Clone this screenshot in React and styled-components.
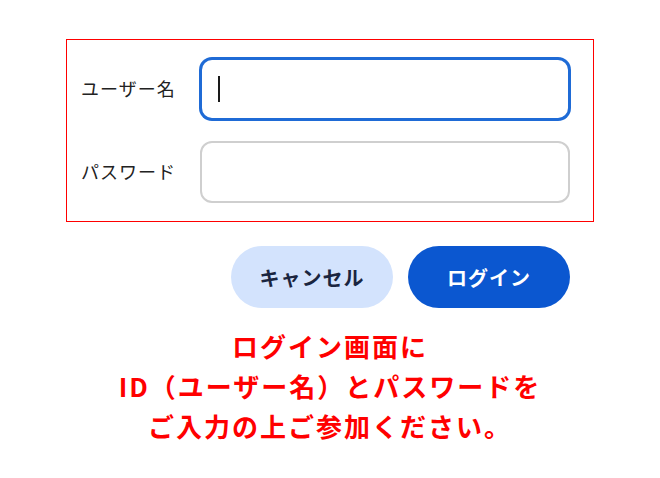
import React from 'react'
import styled, { createGlobalStyle } from 'styled-components'

const GlobalStyle = createGlobalStyle`
  html, body {
    margin: 0;
    padding: 0;
    background: #ffffff;
  }
  body {
    font-family: "Noto Sans CJK JP", "Noto Sans", sans-serif;
  }
`

function App() {
  return (
    <Page>
      <GlobalStyle />
      <FormBox>
        <Label htmlFor="user">ユーザー名</Label>
        <FieldWrap>
          <Field id="user" type="text" $focused autoFocus />
          <Caret />
        </FieldWrap>
        <Label htmlFor="pass">パスワード</Label>
        <FieldWrap>
          <Field id="pass" type="password" />
        </FieldWrap>
      </FormBox>

      <Buttons>
        <PillButton>キャンセル</PillButton>
        <PillButton $primary>ログイン</PillButton>
      </Buttons>

      <Notice>
        ログイン画面に<br />
        ID（ユーザー名）とパスワードを<br />
        ご入力の上ご参加ください。
      </Notice>
    </Page>
  )
}

export default App

const Page = styled.div`
  width: 660px;
  height: 478px;
  display: flex;
  flex-direction: column;
  align-items: center;
  padding-top: 39px;
  box-sizing: border-box;
`

const FormBox = styled.div`
  width: 528px;
  box-sizing: border-box;
  border: 1px solid #ff0000;
  padding: 18px 23px 18px 14px;
  display: grid;
  grid-template-columns: 119px 1fr;
  row-gap: 21px;
  align-items: center;
`

const Label = styled.label`
  font-size: 18px;
  letter-spacing: 1px;
  color: #222222;
  margin-top: -3px;
`

const FieldWrap = styled.div`
  position: relative;
  display: flex;
`

const Field = styled.input`
  flex: 1;
  height: 62px;
  box-sizing: border-box;
  border: 2px solid ${p => (p.$focused ? '#1f6bd6' : '#cfcfcf')};
  box-shadow: ${p => (p.$focused ? '0 0 0 1px #1f6bd6' : 'none')};
  border-radius: 12px;
  padding: 0 16px;
  font-size: 22px;
  font-family: inherit;
  color: #222222;
  caret-color: transparent;
  outline: none;

  &:focus {
    outline: none;
  }
`

const Caret = styled.span`
  position: absolute;
  left: 18px;
  top: 18px;
  width: 2px;
  height: 26px;
  background: #1a1a1a;
  pointer-events: none;
`

const Buttons = styled.div`
  width: 528px;
  box-sizing: border-box;
  padding-right: 24px;
  margin-top: 24px;
  display: flex;
  justify-content: flex-end;
  gap: 15px;
`

const PillButton = styled.button`
  width: 162px;
  height: 62px;
  border: none;
  border-radius: 31px;
  background: ${p => (p.$primary ? '#0b57d0' : '#d3e3fd')};
  color: ${p => (p.$primary ? '#ffffff' : '#1a2540')};
  font-family: inherit;
  font-size: 20px;
  font-weight: 700;
  letter-spacing: 1px;
  cursor: pointer;
`

const Notice = styled.p`
  margin: 18px 0 0;
  text-align: center;
  color: #ff0000;
  font-size: 26px;
  font-weight: 700;
  line-height: 40px;
  letter-spacing: 2px;
`
